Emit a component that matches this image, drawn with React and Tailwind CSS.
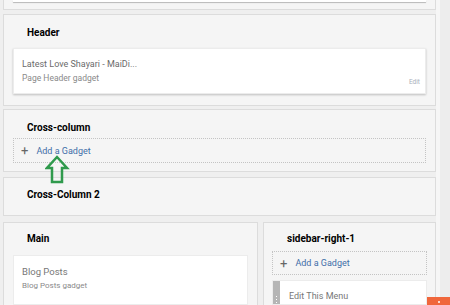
export default function App() {
  const font = { fontFamily: "Roboto, 'Liberation Sans', sans-serif" };
  return (
    <div className="w-[450px] h-[305px] overflow-hidden bg-[#efefef] flex relative" style={font}>
      <div className="w-[436px] pl-[3px] flex flex-col">
        {/* top cut-off section */}
        <div className="h-[10px] border-x border-b border-[#dcdcdc] bg-[#f5f5f5] px-[9px]">
          <div className="h-[2px] bg-white shadow-[0_1px_1px_rgba(0,0,0,0.25)]" />
        </div>

        {/* Header */}
        <div className="mt-[4px] h-[92px] border border-[#dcdcdc] bg-[#f5f5f5] px-[9px] flex flex-col">
          <div className="pl-[14px] pt-[11px] h-[33px] text-[10px] font-bold text-black leading-[14px]">Header</div>
          <div className="h-[46px] bg-white border border-[#ececec] shadow-[0_1px_2px_rgba(0,0,0,0.22)] pl-[8px] pr-[5px] pt-[9px] relative">
            <div className="text-[9px] text-[#6b6b6b] leading-[12px]">Latest Love Shayari - MaiDi...</div>
            <div className="text-[8.5px] text-[#8a8a8a] leading-[12px] mt-[2px]">Page Header gadget</div>
            <div className="absolute right-[5px] bottom-[7px] text-[6.5px] text-[#a9b0ba] leading-[8px]">Edit</div>
          </div>
        </div>

        {/* Cross-column */}
        <div className="mt-[3px] h-[63px] border border-[#dcdcdc] bg-[#f5f5f5] px-[9px] flex flex-col">
          <div className="pl-[14px] pt-[11px] h-[28px] text-[10px] font-bold text-black leading-[14px]">Cross-column</div>
          <div className="h-[25px] border border-dotted border-[#c4c4c4] flex items-center pl-[7px]">
            <span className="text-[13px] text-[#666] leading-[13px]">+</span>
            <span className="ml-[8px] text-[9px] text-[#3f6ea8] leading-[12px]">Add a Gadget</span>
          </div>
        </div>

        {/* Cross-Column 2 */}
        <div className="mt-[5px] h-[39px] border border-[#dcdcdc] bg-[#f5f5f5] px-[9px]">
          <div className="pl-[14px] pt-[10px] text-[10px] font-bold text-black leading-[14px]">Cross-Column 2</div>
        </div>

        {/* Main + sidebar */}
        <div className="mt-[6px] flex gap-[5px] flex-1">
          <div className="w-[255px] border-x border-t border-[#dcdcdc] bg-[#f5f5f5] px-[9px] flex flex-col">
            <div className="pl-[14px] pt-[9px] h-[32px] text-[10px] font-bold text-black leading-[14px]">Main</div>
            <div className="flex-1 bg-white border border-[#ececec] pl-[8px] pt-[10px]">
              <div className="text-[9.5px] text-[#777] leading-[12px]">Blog Posts</div>
              <div className="text-[8px] text-[#8a8a8a] leading-[12px] mt-[2px]">Blog Posts gadget</div>
            </div>
          </div>
          <div className="flex-1 border-x border-t border-[#dcdcdc] bg-[#f5f5f5] px-[8px] flex flex-col">
            <div className="pl-[15px] pt-[9px] h-[28px] text-[10px] font-bold text-black leading-[14px]">sidebar-right-1</div>
            <div className="h-[24px] border border-dotted border-[#c4c4c4] flex items-center pl-[7px]">
              <span className="text-[13px] text-[#666] leading-[13px]">+</span>
              <span className="ml-[8px] text-[9px] text-[#3f6ea8] leading-[12px]">Add a Gadget</span>
            </div>
            <div className="mt-[5px] flex-1 flex bg-white border border-[#ececec]">
              <div className="w-[7px] bg-[#b5b5b5] flex flex-col items-center justify-end pb-[1px] gap-[2px]">
                <div className="w-[1px] h-[1px] bg-white" />
                <div className="w-[1px] h-[1px] bg-white" />
                <div className="w-[1px] h-[1px] bg-white" />
              </div>
              <div className="pl-[9px] pt-[9px] text-[9px] text-[#777] leading-[12px]">Edit This Menu</div>
            </div>
          </div>
        </div>
      </div>

      {/* right margin stripe */}
      <div className="flex-1 flex">
        <div className="w-[4px] bg-[#f6f6f6]" />
        <div className="flex-1 bg-[#ededed]" />
      </div>

      {/* orange button */}
      <div className="absolute left-[427px] top-[297px] w-[30px] h-[20px] bg-[#f0673c] flex justify-center">
        <div className="mt-[4px] w-[2px] h-[2px] bg-white rounded-full ml-[-6px]" />
      </div>

      {/* green arrow */}
      <svg className="absolute left-[45px] top-[155px]" width="25" height="30" viewBox="0 0 25 30">
        <path d="M12 2 L22 13 L17 13 L17 27 L7 27 L7 13 L2 13 Z" fill="none" stroke="#2f9a4c" strokeWidth="2.5" strokeLinejoin="miter" />
      </svg>
    </div>
  );
}
